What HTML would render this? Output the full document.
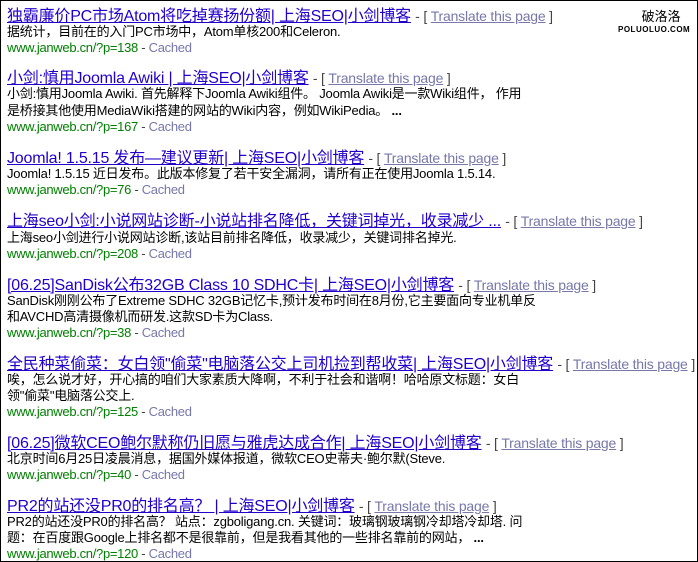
<!DOCTYPE html>
<html><head><meta charset="utf-8"><style>
html,body{margin:0;padding:0;background:#fff}
#w{position:relative;width:696px;height:560px;border:1px solid #000;overflow:hidden;font-family:"Liberation Sans","Noto Sans CJK SC",sans-serif}
.l{position:absolute;left:6px;white-space:nowrap;line-height:16px}
.t{font-size:16px;letter-spacing:-0.2px;color:#2200cc}
.t a{color:#2200cc;text-decoration:underline}
.t .g{color:#444;font-size:14px;letter-spacing:-0.2px}
.t .g a{color:#7777aa}
.s{font-size:13px;color:#000;letter-spacing:-0.2px}
.u{font-size:13px;color:#008000;letter-spacing:-0.3px}
.u a{color:#7777aa}
.u .d{color:#444}
#logo{position:absolute;left:631px;top:8px;text-align:center;font-family:"Liberation Sans","Noto Sans CJK SC",sans-serif}
</style></head><body><div id="w">
<div id="logo"><div style="font-size:13px;line-height:16px">破洛洛</div><div style="font-size:8px;font-weight:bold;letter-spacing:0.5px;margin-left:-14px">POLUOLUO.COM</div></div>

<div class="l t" style="top:7px"><a>独霸廉价PC市场Atom将吃掉赛扬份额| 上海SEO|小剑博客</a> <span class="g">- [ <a>Translate this page</a> ]</span></div>
<div class="l s" style="top:23px">据统计，目前在的入门PC市场中，Atom单核200和Celeron.</div>
<div class="l u" style="top:39px">www.janweb.cn/?p=138 <span class="d">-</span> <a>Cached</a></div>

<div class="l t" style="top:69px"><a>小剑:慎用Joomla Awiki | 上海SEO|小剑博客</a> <span class="g">- [ <a>Translate this page</a> ]</span></div>
<div class="l s" style="top:85px">小剑:慎用Joomla Awiki. 首先解释下Joomla Awiki组件。 Joomla Awiki是一款Wiki组件， 作用</div>
<div class="l s" style="top:102px">是桥接其他使用MediaWiki搭建的网站的Wiki内容，例如WikiPedia。 <b>...</b></div>
<div class="l u" style="top:118px">www.janweb.cn/?p=167 <span class="d">-</span> <a>Cached</a></div>

<div class="l t" style="top:149px"><a>Joomla! 1.5.15 发布—建议更新| 上海SEO|小剑博客</a> <span class="g">- [ <a>Translate this page</a> ]</span></div>
<div class="l s" style="top:165px">Joomla! 1.5.15 近日发布。此版本修复了若干安全漏洞，请所有正在使用Joomla 1.5.14.</div>
<div class="l u" style="top:181px">www.janweb.cn/?p=76 <span class="d">-</span> <a>Cached</a></div>

<div class="l t" style="top:212px"><a>上海seo小剑:小说网站诊断-小说站排名降低，关键词掉光，收录减少 ...</a> <span class="g">- [ <a>Translate this page</a> ]</span></div>
<div class="l s" style="top:229px">上海seo小剑进行小说网站诊断,该站目前排名降低，收录减少，关键词排名掉光.</div>
<div class="l u" style="top:245px">www.janweb.cn/?p=208 <span class="d">-</span> <a>Cached</a></div>

<div class="l t" style="top:276px"><a>[06.25]SanDisk公布32GB Class 10 SDHC卡| 上海SEO|小剑博客</a> <span class="g">- [ <a>Translate this page</a> ]</span></div>
<div class="l s" style="top:292px">SanDisk刚刚公布了Extreme SDHC 32GB记忆卡,预计发布时间在8月份,它主要面向专业机单反</div>
<div class="l s" style="top:308px">和AVCHD高清摄像机而研发.这款SD卡为Class.</div>
<div class="l u" style="top:324px">www.janweb.cn/?p=38 <span class="d">-</span> <a>Cached</a></div>

<div class="l t" style="top:355px"><a>全民种菜偷菜：女白领"偷菜"电脑落公交上司机捡到帮收菜| 上海SEO|小剑博客</a> <span class="g">- [ <a>Translate this page</a> ]</span></div>
<div class="l s" style="top:371px">唉，怎么说才好，开心搞的咱们大家素质大降啊，不利于社会和谐啊！哈哈原文标题：女白</div>
<div class="l s" style="top:387px">领"偷菜"电脑落公交上.</div>
<div class="l u" style="top:403px">www.janweb.cn/?p=125 <span class="d">-</span> <a>Cached</a></div>

<div class="l t" style="top:434px"><a>[06.25]微软CEO鲍尔默称仍旧愿与雅虎达成合作| 上海SEO|小剑博客</a> <span class="g">- [ <a>Translate this page</a> ]</span></div>
<div class="l s" style="top:450px">北京时间6月25日凌晨消息，据国外媒体报道，微软CEO史蒂夫·鲍尔默(Steve.</div>
<div class="l u" style="top:466px">www.janweb.cn/?p=40 <span class="d">-</span> <a>Cached</a></div>

<div class="l t" style="top:497px"><a>PR2的站还没PR0的排名高？ | 上海SEO|小剑博客</a> <span class="g">- [ <a>Translate this page</a> ]</span></div>
<div class="l s" style="top:513px">PR2的站还没PR0的排名高？ 站点：zgboligang.cn. 关键词：玻璃钢玻璃钢冷却塔冷却塔. 问</div>
<div class="l s" style="top:529px">题：在百度跟Google上排名都不是很靠前，但是我看其他的一些排名靠前的网站， <b>...</b></div>
<div class="l u" style="top:545px">www.janweb.cn/?p=120 <span class="d">-</span> <a>Cached</a></div>
</div></body></html>
